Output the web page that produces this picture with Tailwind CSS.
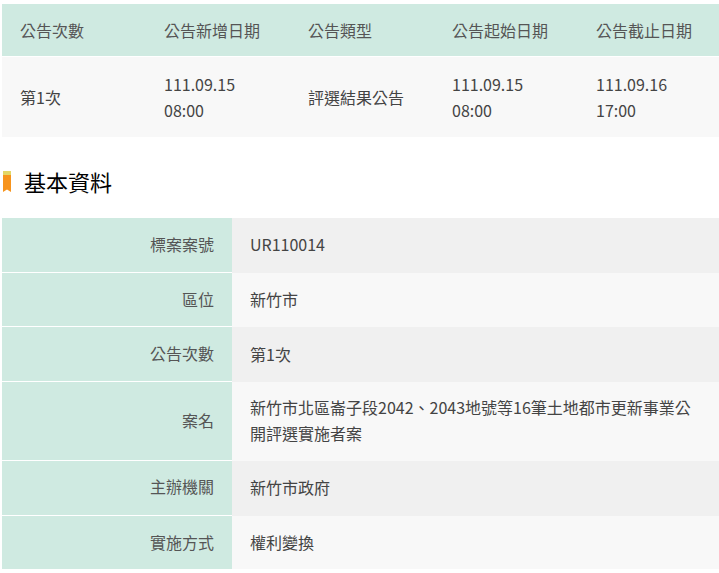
<!DOCTYPE html>
<html lang="zh-Hant">
  <head>
    <meta charset="utf-8">
    <title>基本資料</title>
    <script src="https://cdn.jsdelivr.net/npm/@tailwindcss/browser@4"></script>
  </head>
  <body class="bg-white overflow-hidden font-['Noto_Sans_CJK_TC','Noto_Sans',sans-serif] text-[16px] leading-[26px] text-[#444]">
    <div class="pl-[2px] pt-1">
      <div class="grid grid-cols-[144px_144px_144px_144px_141px] h-[53px] items-center bg-[#cfeae1] text-[#555] border-b border-white">
        <div class="pl-[18px]">公告次數</div>
        <div class="pl-[18px]">公告新增日期</div>
        <div class="pl-[18px]">公告類型</div>
        <div class="pl-[18px]">公告起始日期</div>
        <div class="pl-[18px]">公告截止日期</div>
      </div>
      <div class="grid grid-cols-[144px_144px_144px_144px_141px] h-[80px] items-center bg-[#f8f8f8]">
        <div class="pl-[18px]">第1次</div>
        <div class="pl-[18px]">111.09.15<br>08:00</div>
        <div class="pl-[18px]">評選結果公告</div>
        <div class="pl-[18px]">111.09.15<br>08:00</div>
        <div class="pl-[18px]">111.09.16<br>17:00</div>
      </div>

      <h2 class="flex items-center gap-[13px] h-[81px] pt-[7px] text-[22px] font-normal text-black">
        <svg class="w-[8px] h-[21px] ml-[1px] mt-[1px]" viewBox="0 0 8 21">
          <rect width="8" height="4" fill="#e3d767"/>
          <path d="M0 4H8V21L4 18.5L0 21Z" fill="#f7941d"/>
        </svg>
        基本資料
      </h2>

      <div class="grid grid-cols-[230px_487px]">
        <div class="h-[55px] flex items-center justify-end pr-[18px] pb-[2px] bg-[#cfeae1] text-[#555] border-b border-white">標案案號</div>
        <div class="h-[55px] flex items-center pl-[18px] pb-[4px] bg-[#f0f0f0]">UR110014</div>
        <div class="h-[54px] flex items-center justify-end pr-[18px] pb-[2px] bg-[#cfeae1] text-[#555] border-b border-white">區位</div>
        <div class="h-[54px] flex items-center pl-[18px] pb-[2px] bg-[#f8f8f8]">新竹市</div>
        <div class="h-[55px] flex items-center justify-end pr-[18px] pb-[2px] bg-[#cfeae1] text-[#555] border-b border-white">公告次數</div>
        <div class="h-[55px] flex items-center pl-[18px] pb-[2px] bg-[#f0f0f0]">第1次</div>
        <div class="h-[79px] flex items-center justify-end pr-[18px] pb-[2px] bg-[#cfeae1] text-[#555] border-b border-white">案名</div>
        <div class="h-[79px] flex items-center pl-[18px] pr-[20px] pb-[4px] bg-[#f8f8f8]">新竹市北區崙子段2042、2043地號等16筆土地都市更新事業公開評選實施者案</div>
        <div class="h-[55px] flex items-center justify-end pr-[18px] pb-[4px] bg-[#cfeae1] text-[#555] border-b border-white">主辦機關</div>
        <div class="h-[55px] flex items-center pl-[18px] pb-[4px] bg-[#f0f0f0]">新竹市政府</div>
        <div class="h-[53px] flex items-center justify-end pr-[18px] pb-[1px] bg-[#cfeae1] text-[#555]">實施方式</div>
        <div class="h-[53px] flex items-center pl-[18px] pb-[1px] bg-[#f8f8f8]">權利變換</div>
      </div>
    </div>
  </body>
</html>
